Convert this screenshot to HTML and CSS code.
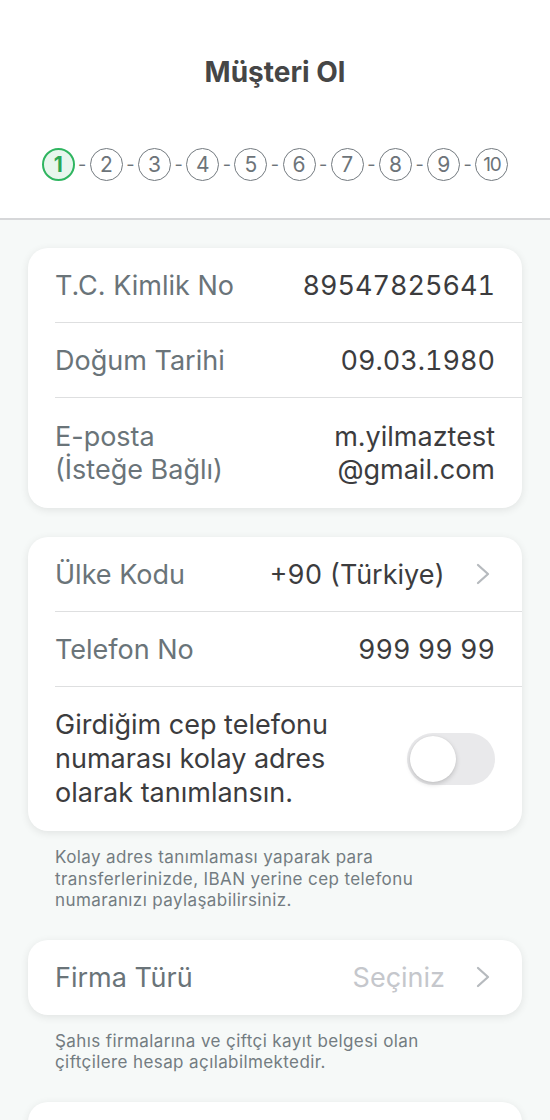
FILE: index.html
```html
<!DOCTYPE html>
<html lang="tr">
<head>
<meta charset="utf-8">
<title>Müşteri Ol</title>
<link rel="stylesheet" href="styles.css">
</head>
<body>
<header class="header">
  <h1 class="title">Müşteri Ol</h1>
  <div class="stepper">
    <span class="step active">1</span><span class="dash">-</span>
    <span class="step">2</span><span class="dash">-</span>
    <span class="step">3</span><span class="dash">-</span>
    <span class="step">4</span><span class="dash">-</span>
    <span class="step">5</span><span class="dash">-</span>
    <span class="step">6</span><span class="dash">-</span>
    <span class="step">7</span><span class="dash">-</span>
    <span class="step">8</span><span class="dash">-</span>
    <span class="step">9</span><span class="dash">-</span>
    <span class="step ten">10</span>
  </div>
</header>
<main class="content">
  <section class="card">
    <div class="row">
      <span class="label">T.C. Kimlik No</span>
      <span class="value num">89547825641</span>
    </div>
    <div class="row">
      <span class="label">Doğum Tarihi</span>
      <span class="value num">09.03.1980</span>
    </div>
    <div class="row tall">
      <span class="label">E-posta<br>(İsteğe Bağlı)</span>
      <span class="value">m.yilmaztest<br>@gmail.com</span>
    </div>
  </section>

  <section class="card">
    <div class="row">
      <span class="label">Ülke Kodu</span>
      <span class="value num with-chevron">+90 (Türkiye)
        <svg class="chevron" viewBox="0 0 16 22" width="16" height="22"><path d="M3 2 L13 11 L3 20" fill="none" stroke="currentColor" stroke-width="2.3" stroke-linecap="round" stroke-linejoin="round"/></svg>
      </span>
    </div>
    <div class="row">
      <span class="label">Telefon No</span>
      <span class="value num">999 99 99</span>
    </div>
    <div class="row toggle-row">
      <span class="toggle-text">Girdiğim cep telefonu<br>numarası kolay adres<br>olarak tanımlansın.</span>
      <span class="switch"><span class="knob"></span></span>
    </div>
  </section>
  <p class="note">Kolay adres tanımlaması yaparak para<br>transferlerinizde, IBAN yerine cep telefonu<br>numaranızı paylaşabilirsiniz.</p>

  <section class="card">
    <div class="row">
      <span class="label">Firma Türü</span>
      <span class="value placeholder with-chevron">Seçiniz
        <svg class="chevron" viewBox="0 0 16 22" width="16" height="22"><path d="M3 2 L13 11 L3 20" fill="none" stroke="currentColor" stroke-width="2.3" stroke-linecap="round" stroke-linejoin="round"/></svg>
      </span>
    </div>
  </section>
  <p class="note">Şahıs firmalarına ve çiftçi kayıt belgesi olan<br>çiftçilere hesap açılabilmektedir.</p>

  <section class="card">
    <div class="row">
      <span class="label">&nbsp;</span>
    </div>
  </section>
</main>
</body>
</html>
```

FILE: styles.css
```css
* { box-sizing: border-box; }

html, body {
  margin: 0;
  padding: 0;
}

body {
  background: #f6f9f8;
  font-family: Inter, "Liberation Sans", Arial, sans-serif;
  color: #3c3c3e;
  overflow: hidden;
}

.header {
  background: #ffffff;
  height: 220px;
  border-bottom: 2px solid #d6d7d9;
  display: flex;
  flex-direction: column;
  align-items: center;
}

.title {
  margin: 56px 0 0;
  font-size: 28px;
  line-height: 32px;
  font-weight: 700;
  color: #464646;
}

.stepper {
  margin-top: 60px;
  display: flex;
  align-items: center;
}

.step {
  width: 33px;
  height: 33px;
  border-radius: 50%;
  border: 1.6px solid #737a7f;
  color: #6d7479;
  font-size: 21px;
  display: flex;
  align-items: center;
  justify-content: center;
  line-height: 1;
}

.step.ten {
  font-size: 19px;
  letter-spacing: -1.2px;
}

.step.active {
  border: 2px solid #2fb560;
  background: #e8f6ed;
  color: #2aa756;
  font-weight: 700;
}

.dash {
  width: 15.2px;
  text-align: center;
  font-size: 18px;
  color: #6d7479;
}

.content {
  padding: 28px 28px 0;
  display: flex;
  flex-direction: column;
}

.card {
  background: #ffffff;
  border-radius: 20px;
  box-shadow: 0 2px 8px rgba(0, 0, 0, 0.09);
  margin-bottom: 29px;
}

.row {
  margin-left: 27px;
  padding-right: 27px;
  min-height: 75px;
  display: flex;
  align-items: center;
  justify-content: space-between;
  border-bottom: 1px solid #dedfe0;
  font-size: 27px;
  line-height: 33px;
}

.row:last-child {
  border-bottom: none;
}

.row.tall {
  padding-top: 22px;
  padding-bottom: 22px;
}

.label {
  color: #6a7479;
}

.value {
  color: #3c3c3e;
  text-align: right;
}

.num {
  font-variant-numeric: tabular-nums;
}

.with-chevron {
  display: flex;
  align-items: center;
  gap: 30px;
}

.placeholder {
  color: #c5c7cc;
}

.chevron {
  color: #b6babe;
  display: block;
  margin-right: 4px;
}

.toggle-row {
  padding-top: 21px;
  padding-bottom: 21px;
  line-height: 34px;
}

.toggle-text {
  color: #3c3c3e;
}

.switch {
  width: 88px;
  height: 52px;
  border-radius: 26px;
  background: #e9e9eb;
  padding: 3px;
  display: flex;
  align-items: center;
  flex-shrink: 0;
}

.knob {
  width: 46px;
  height: 46px;
  border-radius: 50%;
  background: #ffffff;
  box-shadow: 0 2px 5px rgba(0, 0, 0, 0.18), 0 0 1px rgba(0, 0, 0, 0.1);
}

.note {
  margin: -13px 0 28px;
  padding-left: 27px;
  font-size: 17px;
  letter-spacing: 0.4px;
  line-height: 21.5px;
  color: #737c81;
}
```
